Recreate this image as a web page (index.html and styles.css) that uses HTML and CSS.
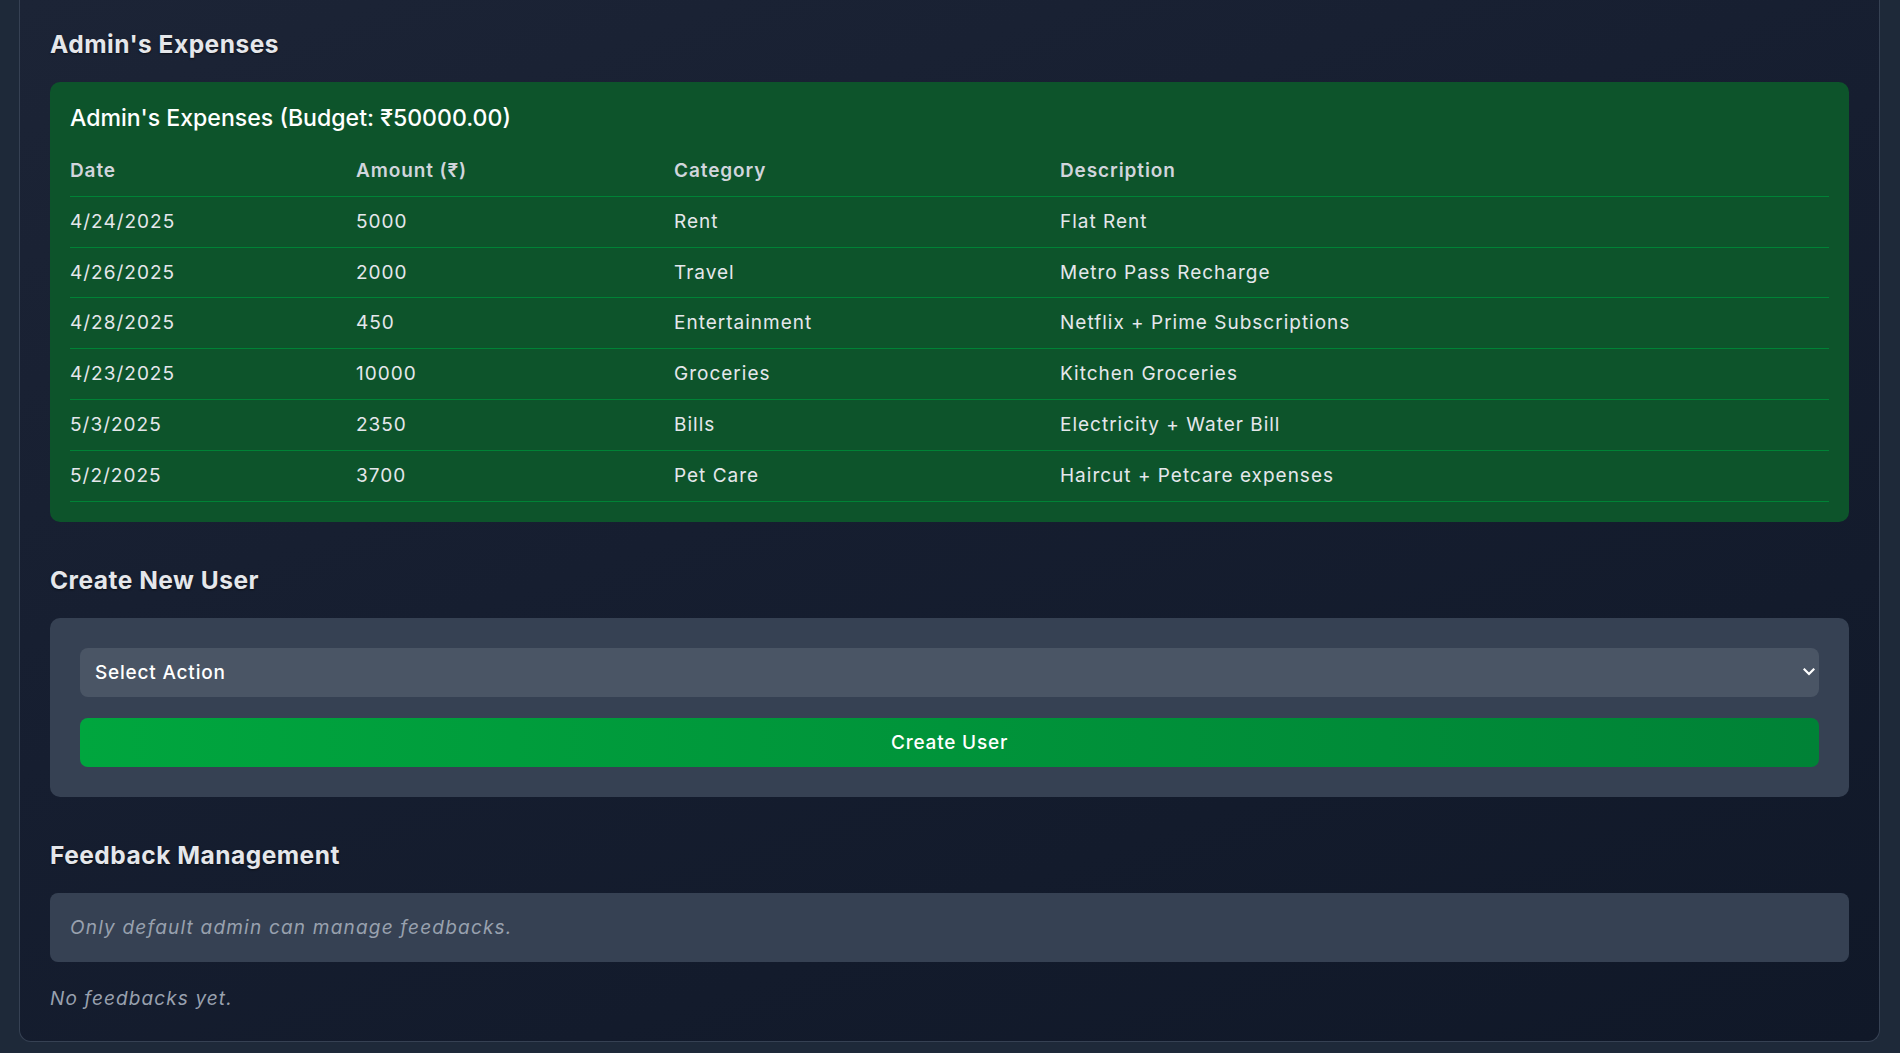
FILE: index.html
```html
<!DOCTYPE html>
<html lang="en">
<head>
<meta charset="utf-8">
<title>Admin Dashboard</title>
<link rel="stylesheet" href="styles.css">
</head>
<body>
<main class="panel">
  <section class="section">
    <h2 class="section-title">Admin's Expenses</h2>
    <div class="expense-card">
      <h3 class="expense-title">Admin's Expenses (Budget: ₹50000.00)</h3>
      <table class="expense-table">
        <colgroup>
          <col class="col-date">
          <col class="col-amount">
          <col class="col-category">
          <col class="col-desc">
        </colgroup>
        <thead>
          <tr><th>Date</th><th>Amount (₹)</th><th>Category</th><th>Description</th></tr>
        </thead>
        <tbody>
          <tr><td>4/24/2025</td><td>5000</td><td>Rent</td><td>Flat Rent</td></tr>
          <tr><td>4/26/2025</td><td>2000</td><td>Travel</td><td>Metro Pass Recharge</td></tr>
          <tr><td>4/28/2025</td><td>450</td><td>Entertainment</td><td>Netflix + Prime Subscriptions</td></tr>
          <tr><td>4/23/2025</td><td>10000</td><td>Groceries</td><td>Kitchen Groceries</td></tr>
          <tr><td>5/3/2025</td><td>2350</td><td>Bills</td><td>Electricity + Water Bill</td></tr>
          <tr><td>5/2/2025</td><td>3700</td><td>Pet Care</td><td>Haircut + Petcare expenses</td></tr>
        </tbody>
      </table>
    </div>
  </section>

  <section class="section">
    <h2 class="section-title">Create New User</h2>
    <div class="form-card">
      <div class="select">
        <span class="select-label">Select Action</span>
        <svg class="select-chevron" width="12" height="8" viewBox="0 0 12 8" aria-hidden="true">
          <path d="M1.5 1.5 L6 6 L10.5 1.5" fill="none" stroke="#ffffff" stroke-width="2.2" stroke-linecap="square"/>
        </svg>
      </div>
      <button class="create-btn" type="button">Create User</button>
    </div>
  </section>

  <section class="section">
    <h2 class="section-title">Feedback Management</h2>
    <div class="notice">Only default admin can manage feedbacks.</div>
    <p class="empty">No feedbacks yet.</p>
  </section>
</main>
</body>
</html>
```

FILE: styles.css
```css
html, body {
  margin: 0;
  padding: 0;
}

body {
  background: #1e2939;
  font-family: Inter, "Open Sans", "Liberation Sans", sans-serif;
  color: #e5e7eb;
  min-height: 1053px;
}

.panel {
  margin: 0 20px 0 19px;
  padding: 28px 30px 28px 30px;
  border: 1px solid #364153;
  border-top: none;
  border-radius: 0 0 12px 12px;
  background: linear-gradient(160deg, #1c2436 0%, #161e30 45%, #101828 100%);
  box-sizing: border-box;
}

.section + .section {
  margin-top: 42px;
}

.section-title {
  margin: 0 0 22px 0;
  font-size: 24.5px;
  line-height: 32px;
  font-weight: 700;
  color: #e5e7eb;
  text-shadow: 0 1px 2px rgba(0, 0, 0, 0.55);
  letter-spacing: 0.5px;
}

.expense-card {
  background: #0d542b;
  border-radius: 10px;
  padding: 20px;
}

.expense-title {
  margin: 0 0 12px 0;
  font-size: 23.1px;
  line-height: 32px;
  font-weight: 500;
  color: #ffffff;
}

.expense-table {
  width: 100%;
  border-collapse: collapse;
  table-layout: fixed;
}

.col-date { width: 286px; }
.col-amount { width: 318px; }
.col-category { width: 386px; }

.expense-table th,
.expense-table td {
  text-align: left;
  padding: 12px 0;
  line-height: 25.8px;
  font-size: 19px;
  border-bottom: 1px solid #008236;
}

.expense-table th {
  font-weight: 600;
  color: #d1d5dc;
  letter-spacing: 0.9px;
}

.expense-table td {
  font-weight: 400;
  color: #e5e7eb;
  letter-spacing: 1px;
}

.form-card {
  background: #364153;
  border-radius: 10px;
  padding: 30px;
  display: flex;
  flex-direction: column;
  gap: 20.6px;
}

.select {
  height: 49.4px;
  background: #4a5565;
  border-radius: 8px;
  padding: 0 4px 0 15px;
  display: flex;
  align-items: center;
  justify-content: space-between;
  font-size: 19px;
  font-weight: 500;
  letter-spacing: 0.8px;
  color: #ffffff;
}

.select-chevron {
  display: block;
}

.create-btn {
  height: 49.4px;
  border: none;
  border-radius: 8px;
  background: linear-gradient(90deg, #00a63e, #008236);
  color: #ffffff;
  font-family: inherit;
  font-size: 19px;
  font-weight: 500;
  letter-spacing: 0.8px;
  cursor: pointer;
}

.notice {
  background: #364153;
  border-radius: 8px;
  padding: 20px;
  line-height: 29px;
  font-size: 19px;
  font-style: italic;
  letter-spacing: 1.2px;
  color: #99a1af;
}

.empty {
  margin: 23px 0 0 0;
  font-size: 19px;
  line-height: 28px;
  font-style: italic;
  letter-spacing: 1.1px;
  color: #99a1af;
}
```
